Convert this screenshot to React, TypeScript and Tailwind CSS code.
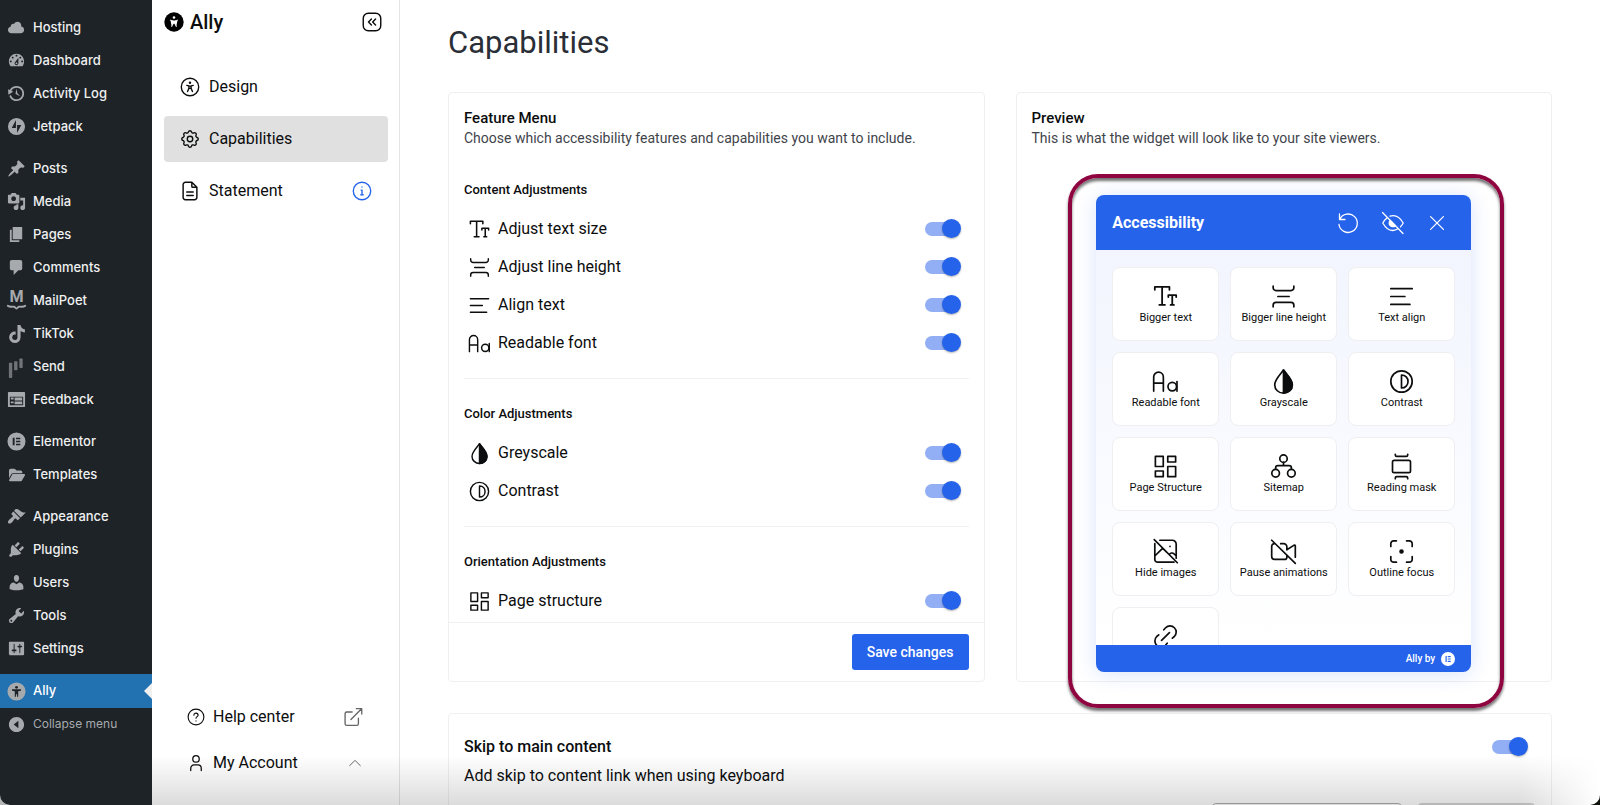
import React from 'react';
import { FaFolderOpen, FaTiktok } from 'react-icons/fa6';

interface IconProps {
  className?: string;
}

// 20px grid, filled
const DASHICONS = {
  cloud:
    'M14.9 9c1.8.2 3.1 1.7 3.1 3.5 0 1.9-1.6 3.5-3.5 3.5h-10C2.6 16 1 14.4 1 12.5 1 10.7 2.3 9.3 4.1 9 4 8.9 4 8.7 4 8.5 4 7.1 5.1 6 6.5 6c.3 0 .7.1.9.2C8.1 4.9 9.4 4 11 4c2.2 0 4 1.8 4 4 0 .4-.1.7-.1 1z',
  dashboard:
    'M3.76 16h12.48c1.1-1.37 1.76-3.11 1.76-5 0-4.42-3.58-8-8-8s-8 3.58-8 8c0 1.89.66 3.63 1.76 5zM10 4c.55 0 1 .45 1 1s-.45 1-1 1-1-.45-1-1 .45-1 1-1zM6 6c.55 0 1 .45 1 1s-.45 1-1 1-1-.45-1-1 .45-1 1-1zm8 0c.55 0 1 .45 1 1s-.45 1-1 1-1-.45-1-1 .45-1 1-1zm-5.37 5.55L12 7v6c0 1.1-.9 2-2 2s-2-.9-2-2c0-.57.24-1.08.63-1.45zM4 10c.55 0 1 .45 1 1s-.45 1-1 1-1-.45-1-1 .45-1 1-1zm12 0c.55 0 1 .45 1 1s-.45 1-1 1-1-.45-1-1 .45-1 1-1zm-5 3c0-.55-.45-1-1-1s-1 .45-1 1 .45 1 1 1 1-.45 1-1z',
  backup:
    'M13.65 2.88c3.93 2.01 5.48 6.84 3.47 10.77s-6.83 5.48-10.77 3.47c-1.87-.96-3.2-2.56-3.86-4.4l1.64-1.03c.45 1.57 1.52 2.95 3.08 3.76 3.01 1.54 6.69.35 8.23-2.66 1.55-3.01.36-6.69-2.65-8.24C9.78 3.01 6.1 4.2 4.56 7.21l1.88.97-4.95 3.08-.39-5.82 1.78.91C4.9 2.4 9.75.89 13.65 2.88zm-4.36 7.83C9.11 10.53 9 10.28 9 10c0-.07.03-.12.04-.19h-.01L10 5l.97 4.81L14 13l-4.5-2.12.02-.02c-.08-.04-.16-.09-.23-.15z',
  jetpack: 'M10 1a9 9 0 1 0 0 18 9 9 0 0 0 0-18zM9.4 11.5H5L9.4 3.2zM10.6 16.8V8.5H15z',
  post: 'M10.44 3.02l1.82-1.82 6.36 6.35-1.83 1.82c-1.05-.68-2.48-.57-3.41.36l-.75.75c-.92.93-1.04 2.35-.35 3.41l-1.83 1.82-2.41-2.41-2.8 2.79c-.42.42-3.38 2.71-3.8 2.29s1.86-3.39 2.28-3.81l2.79-2.79L4.1 9.36l1.83-1.82c1.05.69 2.48.57 3.4-.36l.75-.75c.93-.92 1.05-2.35.36-3.41z',
  media:
    'M13 11V4c0-.55-.45-1-1-1h-1.67L9 1H5L3.67 3H2c-.55 0-1 .45-1 1v7c0 .55.45 1 1 1h10c.55 0 1-.45 1-1zM7 4.5c1.38 0 2.5 1.12 2.5 2.5S8.38 9.5 7 9.5 4.5 8.38 4.5 7 5.62 4.5 7 4.5zM14 6h5v10.5c0 1.38-1.12 2.5-2.5 2.5S14 17.88 14 16.5s1.12-2.5 2.5-2.5c.17 0 .34.02.5.05V9h-3V6zm-4 8.05V13h2v3.5c0 1.38-1.12 2.5-2.5 2.5S7 17.88 7 16.5 8.12 14 9.5 14c.17 0 .34.02.5.05z',
  page: 'M6 15V2h10v13H6zm-1 1h8v2H3V5h2v11z',
  comments: 'M5 2h9c1.1 0 2 .9 2 2v7c0 1.1-.9 2-2 2h-2l-5 5v-5H5c-1.1 0-2-.9-2-2V4c0-1.1.9-2 2-2z',
  feedback:
    'M2 2h16c.55 0 1 .45 1 1v14c0 .55-.45 1-1 1H2c-.55 0-1-.45-1-1V3c0-.55.45-1 1-1zm15 14V7H3v9h14zM4 8v2h3V8H4zm4 0v3h8V8H8zm-4 4v2h3v-2H4zm4 0v3h8v-3H8z',
  elementor: 'M10 .5a9.5 9.5 0 1 0 0 19 9.5 9.5 0 0 0 0-19zM6 6h2v8H6zM9.5 6H14v1.7H9.5zM9.5 9.15H14v1.7H9.5zM9.5 12.3H14V14H9.5z',
  appearance:
    'M14.48 11.06L7.41 3.99l1.5-1.5c.5-.56 2.3-.47 3.51.32 1.21.8 1.43 1.28 2.91 2.1 1.18.64 2.45 1.26 4.45.85zm-.71.71L6.7 4.7 4.93 6.47c-.39.39-.39 1.02 0 1.41l1.06 1.06c.39.39.39 1.03 0 1.42-.6.6-1.43 1.11-2.21 1.69-.35.26-.7.53-1.01.84C1.43 14.23.4 16.08 1.4 17.07c.99 1 2.84-.03 4.18-1.36.31-.31.58-.66.85-1.02.57-.78 1.08-1.61 1.69-2.21.39-.39 1.02-.39 1.41 0l1.06 1.06c.39.39 1.02.39 1.41 0z',
  plugins:
    'M13.11 4.36L9.87 7.6 8 5.73l3.24-3.24c.35-.34 1.05-.2 1.56.32.52.51.66 1.21.31 1.55zm-8 1.77l.91-1.12 9.01 9.01-1.19.84c-.71.71-2.63 1.16-3.82 1.16H6.14L4.9 17.26c-.59.59-1.54.59-2.12 0-.59-.58-.59-1.53 0-2.12l1.24-1.24v-3.88c0-1.13.4-3.19 1.09-3.89zm7.26 3.97l3.24-3.24c.34-.35 1.04-.21 1.55.31.52.51.66 1.21.31 1.55l-3.24 3.25z',
  users:
    'M10 9.25c-2.27 0-2.73-3.44-2.73-3.44C7 4.02 7.82 2 9.97 2c2.16 0 2.98 2.02 2.71 3.81 0 0-.41 3.44-2.68 3.44zm0 2.57L12.72 10c2.39 0 4.52 2.33 4.52 4.53v2.49s-3.65 1.13-7.24 1.13c-3.65 0-7.24-1.13-7.24-1.13v-2.49c0-2.25 1.94-4.48 4.47-4.48z',
  tools:
    'M16.68 9.77c-1.34 1.34-3.3 1.67-4.95.99l-5.41 6.52c-.99.99-2.59.99-3.58 0s-.99-2.59 0-3.57l6.52-5.42c-.68-1.65-.35-3.61.99-4.95 1.28-1.28 3.12-1.62 4.72-1.06l-2.89 2.89 2.82 2.82 2.86-2.87c.53 1.58.18 3.39-1.08 4.65zM3.81 16.21c.4.39 1.04.39 1.43 0 .4-.4.4-1.04 0-1.43-.39-.4-1.03-.4-1.43 0-.39.39-.39 1.03 0 1.43z',
  settings:
    'M18 16V4c0-.55-.45-1-1-1H3c-.55 0-1 .45-1 1v12c0 .55.45 1 1 1h14c.55 0 1-.45 1-1zM8 11h1c.55 0 1 .45 1 1s-.45 1-1 1H8v1.5c0 .28-.22.5-.5.5s-.5-.22-.5-.5V13H6c-.55 0-1-.45-1-1s.45-1 1-1h1V5.5c0-.28.22-.5.5-.5s.5.22.5.5V11zm5-2h-1c-.55 0-1-.45-1-1s.45-1 1-1h1V5.5c0-.28.22-.5.5-.5s.5.22.5.5V7h1c.55 0 1 .45 1 1s-.45 1-1 1h-1v5.5c0 .28-.22.5-.5.5s-.5-.22-.5-.5V9z',
  collapse: 'M10 2c4.42 0 8 3.58 8 8s-3.58 8-8 8-8-3.58-8-8 3.58-8 8-8zm2 12V6l-5 4z'
};

const Dashicon: React.FC<{ name: keyof typeof DASHICONS }> = ({ name }) => (
  <svg viewBox="0 0 20 20" className="h-[19px] w-[19px]" fill="currentColor" fillRule="evenodd">
    <path d={DASHICONS[name]} />
  </svg>
);

const MailPoetIcon = () => (
  <svg viewBox="0 0 20 20" className="h-[19px] w-[19px] overflow-visible" fill="currentColor">
    <text x="10" y="12" textAnchor="middle" fontSize="17" fontWeight="700" fontFamily="Roboto, sans-serif">
      M
    </text>
    <path
      d="M.8 15.5c2.5 1.9 4.5.6 6.700 1.100 1.200.3 1.500 1.900 2.500 1.900s1.300-1.600 2.500-1.900c2.200-.5 4.200.8 6.700-1.100"
      fill="none"
      stroke="currentColor"
      strokeWidth="2"
      strokeLinecap="round"
    />
  </svg>
);

const SendIcon = () => (
  <svg viewBox="0 0 20 20" className="h-[19px] w-[19px] overflow-visible opacity-60" fill="currentColor">
    <rect x="2" y="6" width="3.5" height="16" rx=".8" />
    <rect x="7.5" y="4.5" width="3.5" height="9.5" rx=".8" />
    <rect x="13" y="1.500" width="3.5" height="10" rx=".8" />
  </svg>
);

const AllyMenuIcon = () => (
  <svg viewBox="0 0 20 20" className="h-[19px] w-[19px]">
    <circle cx="10" cy="10" r="9.5" fill="#a7aaad" />
    <g fill="#1d2327">
      <circle cx="10" cy="5.600" r="1.500" />
      <path d="M5.300 7.600h9.400v1.600l-2.900.5v5.800h-1.200v-2.700H9.400v2.700H8.200V9.700l-2.900-.5z" />
    </g>
  </svg>
);

// 24px grid, outlined
const Outline: React.FC<IconProps & { children: React.ReactNode; strokeWidth?: number }> = ({
  className = 'h-6 w-6',
  children,
  strokeWidth = 1.5
}) => (
  <svg
    viewBox="0 0 24 24"
    className={className}
    fill="none"
    stroke="currentColor"
    strokeWidth={strokeWidth}
    strokeLinecap="round"
    strokeLinejoin="round"
  >
    {children}
  </svg>
);

const PersonCircle: React.FC<IconProps> = ({ className }) => (
  <Outline className={className}>
    <circle cx="12" cy="12" r="9.5" />
    <circle cx="12" cy="7.400" r="1.300" fill="currentColor" stroke="none" />
    <path d="M8.500 10.200l2.300.6v2.700L9.300 17M15.500 10.200l-2.300.6v2.700l1.500 3.500M10.800 11h2.400v2.500h-2.400z" />
  </Outline>
);

const AllyLogo = () => (
  <svg viewBox="0 0 20 20" className="h-5 w-5">
    <circle cx="10" cy="10" r="9.700" fill="#000" />
    <circle cx="10" cy="5.500" r="1.300" fill="#fff" />
    <path
      d="M6.500 8.200l2.800.7v2.500L7.700 14.600M13.500 8.200l-2.800.7v2.500l1.600 3.200M9.300 9h1.400v2.200H9.300z"
      fill="#fff"
      stroke="#fff"
      strokeWidth=".9"
      strokeLinejoin="round"
      strokeLinecap="round"
    />
  </svg>
);

const GearIcon: React.FC<IconProps> = ({ className }) => (
  <Outline className={className}>
    <path d="M10.325 4.317c.426-1.756 2.924-1.756 3.350 0a1.724 1.724 0 0 0 2.573 1.066c1.543-.94 3.310.826 2.370 2.370a1.724 1.724 0 0 0 1.065 2.572c1.756.426 1.756 2.924 0 3.350a1.724 1.724 0 0 0-1.066 2.573c.94 1.543-.826 3.310-2.370 2.370a1.724 1.724 0 0 0-2.572 1.065c-.426 1.756-2.924 1.756-3.350 0a1.724 1.724 0 0 0-2.573-1.066c-1.543.94-3.310-.826-2.370-2.370a1.724 1.724 0 0 0-1.065-2.572c-1.756-.426-1.756-2.924 0-3.350a1.724 1.724 0 0 0 1.066-2.573c-.94-1.543.826-3.310 2.370-2.370 1 .608 2.296.07 2.572-1.065z" />
    <circle cx="12" cy="12" r="3" />
  </Outline>
);

const DocIcon: React.FC<IconProps> = ({ className }) => (
  <Outline className={className} strokeWidth={1.6}>
    <path d="M14 2.500v4.500a1 1 0 0 0 1 1h4.500M17 21.500H7A2.500 2.500 0 0 1 4.500 19V5A2.500 2.500 0 0 1 7 2.500h7L19.500 8v11a2.500 2.500 0 0 1-2.500 2.500zM8.500 13h7M8.500 17h7" />
  </Outline>
);

const TextSizeIcon: React.FC<IconProps> = ({ className }) => (
  <Outline className={className} strokeWidth={1.6}>
    <path d="M2.500 6V3.500h13V6M9 3.500v16M6.500 19.500h5M14.500 12.500v-1.700h7v1.700M18 10.800v8.700M16.500 19.500h3" />
  </Outline>
);

const LineHeightIcon: React.FC<IconProps> = ({ className }) => (
  <Outline className={className}>
    <path d="M2.800 2.800v1.400a2.500 2.500 0 0 0 2.500 2.500h13.400a2.500 2.500 0 0 0 2.500-2.500V2.800M2.800 21.200v-1.400a2.500 2.500 0 0 1 2.500-2.500h13.400a2.500 2.500 0 0 1 2.500 2.500v1.400M7 12h10" />
  </Outline>
);

const AlignIcon: React.FC<IconProps> = ({ className }) => (
  <Outline className={className}>
    <path d="M2.500 5h19M2.500 12H15M2.500 19h17" />
  </Outline>
);

const FontIcon: React.FC<IconProps> = ({ className }) => (
  <Outline className={className}>
    <path d="M1.500 20.500V8a4.300 4.300 0 0 1 8.600 0v12.500M1.500 13.500h8.600" />
    <circle cx="18" cy="16.500" r="3.800" />
    <path d="M22.200 12v8.500" />
  </Outline>
);

const DropIcon: React.FC<IconProps> = ({ className }) => (
  <Outline className={className}>
    <path d="M12 1.800c-2 3.200-7.800 8.200-7.800 13.200a7.800 7.400 0 0 0 15.600 0c0-5-5.800-10-7.800-13.200z" />
    <path d="M12 1.800v20.600a7.800 7.400 0 0 0 7.800-7.400c0-5-5.800-10-7.800-13.200z" fill="currentColor" />
  </Outline>
);

const ContrastIcon: React.FC<IconProps> = ({ className }) => (
  <Outline className={className}>
    <circle cx="12" cy="12" r="9.5" />
    <path d="M12 6.200v11.600c3.500 0 5.800-2.600 5.800-5.800S15.500 6.200 12 6.200z" />
  </Outline>
);

const StructureIcon: React.FC<IconProps> = ({ className }) => (
  <Outline className={className}>
    <path d="M3 3h7v9H3zM14 3h7v5h-7zM3 16h7v5H3zM14 12h7v9h-7z" />
  </Outline>
);

const SitemapIcon: React.FC<IconProps> = ({ className }) => (
  <Outline className={className}>
    <circle cx="12" cy="5" r="3.300" />
    <circle cx="5" cy="18" r="3.400" />
    <circle cx="19" cy="18" r="3.400" />
    <path d="M12 8.300v3M5 14.300v-1a2 2 0 0 1 2-2h10a2 2 0 0 1 2 2v1" />
  </Outline>
);

const ReadingMaskIcon: React.FC<IconProps> = ({ className }) => (
  <Outline className={className}>
    <rect x="4" y="6.500" width="16" height="11" rx="1.500" />
    <path d="M6.500 1.200v.6A1.200 1.200 0 0 0 7.700 3h8.600a1.200 1.200 0 0 0 1.200-1.200v-.6M6.500 22.800v-.6A1.200 1.200 0 0 1 7.700 21h8.600a1.200 1.200 0 0 1 1.200 1.200v.6" />
  </Outline>
);

const HideImagesIcon: React.FC<IconProps> = ({ className }) => (
  <Outline className={className}>
    <path d="M7 2h11a3.500 3.500 0 0 1 3.500 3.500V18M19.500 21.500H5A2.500 2.500 0 0 1 2.500 19V5M2 1.500l20.500 20.500M2.500 16L8 10.500c1-1 2-1 3 0l2 2M15.500 14.500c1-1.200 2.800-1.500 4-.5l2 2M16 7.500h.01" />
  </Outline>
);

const PauseAnimationsIcon: React.FC<IconProps> = ({ className }) => (
  <Outline className={className}>
    <path d="M1.500 2l21 20.500M9.500 5H12a3 3 0 0 1 3 3v2.500l6.500-4.200a.7.700 0 0 1 1 .6V17M15 15.500V17a2 2 0 0 1-2 2H4a2.500 2.500 0 0 1-2.500-2.500v-9A2.500 2.500 0 0 1 4 5" />
  </Outline>
);

const FocusIcon: React.FC<IconProps> = ({ className }) => (
  <Outline className={className}>
    <path d="M2.500 7.500V5A2.500 2.500 0 0 1 5 2.500h2.500M16.500 2.500H19A2.500 2.500 0 0 1 21.500 5v2.500M21.500 16.500V19a2.500 2.500 0 0 1-2.500 2.500h-2.500M7.500 21.500H5A2.500 2.500 0 0 1 2.500 19v-2.500" />
    <circle cx="12" cy="12" r="1.300" fill="currentColor" />
  </Outline>
);

const LinkIcon: React.FC<IconProps> = ({ className }) => (
  <Outline className={className}>
    <path d="M8.500 15.500l7-7M10.500 6l1.600-1.800a5.500 5.500 0 0 1 7.800 7.800l-1.800 1.500M13.500 18l-1.500 1.800A5.500 5.500 0 0 1 4.200 12L6 10.500" />
  </Outline>
);

const NAV_GROUPS = [
  [
    { label: 'Hosting', icon: <Dashicon name="cloud" /> },
    { label: 'Dashboard', icon: <Dashicon name="dashboard" /> },
    { label: 'Activity Log', icon: <Dashicon name="backup" /> },
    { label: 'Jetpack', icon: <Dashicon name="jetpack" /> }
  ],
  [
    { label: 'Posts', icon: <Dashicon name="post" /> },
    { label: 'Media', icon: <Dashicon name="media" /> },
    { label: 'Pages', icon: <Dashicon name="page" /> },
    { label: 'Comments', icon: <Dashicon name="comments" /> },
    { label: 'MailPoet', icon: <MailPoetIcon /> },
    { label: 'TikTok', icon: <FaTiktok className="h-[18px] w-[18px]" /> },
    { label: 'Send', icon: <SendIcon /> },
    { label: 'Feedback', icon: <Dashicon name="feedback" /> }
  ],
  [
    { label: 'Elementor', icon: <Dashicon name="elementor" /> },
    { label: 'Templates', icon: <FaFolderOpen className="h-4 w-4" /> }
  ],
  [
    { label: 'Appearance', icon: <Dashicon name="appearance" /> },
    { label: 'Plugins', icon: <Dashicon name="plugins" /> },
    { label: 'Users', icon: <Dashicon name="users" /> },
    { label: 'Tools', icon: <Dashicon name="tools" /> },
    { label: 'Settings', icon: <Dashicon name="settings" /> }
  ]
];

const FEATURES = [
  {
    title: 'Content Adjustments',
    items: [
      { label: 'Adjust text size', Icon: TextSizeIcon },
      { label: 'Adjust line height', Icon: LineHeightIcon },
      { label: 'Align text', Icon: AlignIcon },
      { label: 'Readable font', Icon: FontIcon }
    ]
  },
  {
    title: 'Color Adjustments',
    items: [
      { label: 'Greyscale', Icon: DropIcon },
      { label: 'Contrast', Icon: ContrastIcon }
    ]
  },
  {
    title: 'Orientation Adjustments',
    items: [{ label: 'Page structure', Icon: StructureIcon }]
  }
];

const TILES = [
  { label: 'Bigger text', Icon: TextSizeIcon },
  { label: 'Bigger line height', Icon: LineHeightIcon },
  { label: 'Text align', Icon: AlignIcon },
  { label: 'Readable font', Icon: FontIcon },
  { label: 'Grayscale', Icon: DropIcon },
  { label: 'Contrast', Icon: ContrastIcon },
  { label: 'Page Structure', Icon: StructureIcon },
  { label: 'Sitemap', Icon: SitemapIcon },
  { label: 'Reading mask', Icon: ReadingMaskIcon },
  { label: 'Hide images', Icon: HideImagesIcon },
  { label: 'Pause animations', Icon: PauseAnimationsIcon },
  { label: 'Outline focus', Icon: FocusIcon }
];

const Toggle: React.FC<{ id: string }> = ({ id }) => (
  <input
    id={id}
    type="checkbox"
    defaultChecked
    className="relative h-5 w-9 shrink-0 cursor-pointer appearance-none before:absolute before:top-[3px] before:left-0 before:h-3.5 before:w-[34px] before:rounded-full before:bg-gray-300 after:absolute after:top-0 after:left-0 after:h-[19px] after:w-[19px] after:rounded-full after:bg-white after:shadow-[0_1px_2px_rgba(0,0,0,0.3)] checked:before:bg-[#92aff5] checked:after:left-[17px] checked:after:bg-[#2563eb]"
  />
);

const AdminMenu = () => (
  <nav className="w-[152px] shrink-0 bg-[#1d2327] pt-[11px] font-['Inter',sans-serif] text-[13px] font-medium text-[#f0f0f1]">
    {NAV_GROUPS.map((group, i) => (
      <ul key={i} className="mb-[9px]">
        {group.map(({ label, icon }) => (
          <li key={label}>
            <a href="#" className="flex h-[33px] items-center gap-[7px] pl-[7px]">
              <span className="flex w-[19px] justify-center text-[#a7aaad]">{icon}</span>
              {label}
            </a>
          </li>
        ))}
      </ul>
    ))}
    <a href="#" className="relative flex h-[34px] items-center gap-[7px] bg-[#2271b1] pl-[6px] text-white">
      <span className="flex w-5 justify-center">
        <AllyMenuIcon />
      </span>
      Ally
      <span className="absolute top-[9px] right-0 border-y-8 border-r-8 border-y-transparent border-r-[#f0f0f1]" />
    </a>
    <button className="flex h-8 items-center gap-[7px] pl-[7px] text-xs font-normal text-[#a7aaad]">
      <Dashicon name="collapse" />
      Collapse menu
    </button>
  </nav>
);

const AllySidebar = () => (
  <aside className="flex w-[248px] shrink-0 flex-col border-r border-[#e4e4e6] pr-[11px] pl-3 text-base">
    <div className="flex h-[44px] items-center pr-[6px]">
      <AllyLogo />
      <span className="ml-[6px] flex-1 text-xl font-medium">Ally</span>
      <button aria-label="Collapse sidebar">
        <Outline className="h-5 w-5" strokeWidth={1.7}>
          <rect x="1.500" y="1.500" width="21" height="21" rx="6" />
          <path d="M11.300 8.500L7.800 12l3.500 3.500M16.300 8.500L12.800 12l3.500 3.500" />
        </Outline>
      </button>
    </div>
    <nav className="mt-5 flex flex-col gap-[6px]">
      <a href="#" className="flex h-[46px] items-center gap-2 px-[15px]">
        <PersonCircle className="h-[22px] w-[22px]" />
        Design
      </a>
      <a href="#" className="flex h-[46px] items-center gap-2 rounded bg-[#e0e0e0] px-[15px]">
        <GearIcon className="h-[22px] w-[22px]" />
        Capabilities
      </a>
      <a href="#" className="flex h-[46px] items-center gap-2 px-[15px]">
        <DocIcon className="h-[22px] w-[22px]" />
        <span className="flex-1">Statement</span>
        <Outline className="h-[22px] w-[22px] text-[#2563eb]">
          <circle cx="12" cy="12" r="9.5" />
          <path d="M12 7.500v.2M11 11h1v5M10.500 16.200h3" />
        </Outline>
      </a>
    </nav>
    <div className="mt-auto mb-[19px] pr-[25px] pl-[23px]">
      <a href="#" className="flex h-[46px] items-center gap-2">
        <Outline className="h-[18px] w-[18px]">
          <circle cx="12" cy="12" r="10.500" />
          <path d="M9.200 9.500c0-3.700 5.600-3.600 5.600 0 0 2-2.800 2-2.800 4M12 17v.2" />
        </Outline>
        <span className="flex-1">Help center</span>
        <Outline className="h-5 w-5 text-[#666]" strokeWidth={1.6}>
          <path d="M11 6H4.500A2 2 0 0 0 2.500 8v12a2 2 0 0 0 2 2h12a2 2 0 0 0 2-2v-6.500M9.500 15L22 2.500M16 2h6.500v6.500" />
        </Outline>
      </a>
      <button className="flex h-[46px] w-full items-center gap-2 text-left">
        <Outline className="h-[18px] w-[18px]" strokeWidth={1.7}>
          <circle cx="12" cy="6.500" r="4.300" />
          <path d="M5 22v-3a4.500 4.500 0 0 1 4.500-4.500h5A4.500 4.500 0 0 1 19 19v3" />
        </Outline>
        <span className="flex-1">My Account</span>
        <Outline className="h-4 w-4 text-[#666]">
          <path d="M4 16l8-8 8 8" />
        </Outline>
      </button>
    </div>
  </aside>
);

const FeatureMenu = () => (
  <section className="flex h-[590px] flex-col rounded border border-[#f0f0f1]">
    <div className="min-h-0 flex-1 overflow-hidden px-[15px] pt-[15px]">
      <h2 className="text-[15px] leading-5 font-medium">Feature Menu</h2>
      <p className="text-sm leading-5 text-[#3f444b]">
        Choose which accessibility features and capabilities you want to include.
      </p>
      <div className="mt-8">
        {FEATURES.map(({ title, items }) => (
          <div key={title} className="mb-[25px] border-b border-[#f0f0f1] pb-4">
            <h3 className="mb-[10px] text-[13px] leading-5 font-medium">{title}</h3>
            {items.map(({ label, Icon }) => (
              <div key={label} className="flex h-[38px] items-center gap-[7px] pr-2 pl-1">
                <Icon className="h-[23px] w-[23px]" />
                <label htmlFor={label} className="flex-1 text-base">
                  {label}
                </label>
                <Toggle id={label} />
              </div>
            ))}
          </div>
        ))}
      </div>
    </div>
    <div className="flex h-[59px] shrink-0 items-center justify-end border-t border-[#f0f0f1] px-[15px]">
      <button className="h-9 rounded-[3px] bg-[#2563eb] px-[15px] text-sm font-medium text-white">Save changes</button>
    </div>
  </section>
);

const Widget = () => (
  <div className="flex h-[477px] flex-col overflow-hidden rounded-lg shadow-[0_2px_20px_rgba(37,99,235,0.18)]">
    <div className="flex h-[55px] shrink-0 items-center bg-[#2563eb] px-4 text-white">
      <span className="flex-1 text-base font-bold">Accessibility</span>
      <div className="flex items-center gap-[21px] pr-[7px]">
        <button aria-label="Reset">
          <Outline className="h-6 w-6" strokeWidth={1.3}>
            <path d="M3.500 3v5.500H9M3.800 8.300a9.200 9.200 0 1 1-.8 5.200" />
          </Outline>
        </button>
        <button aria-label="Hide widget">
          <Outline className="h-6 w-6" strokeWidth={1.3}>
            <path d="M1.500 1.500l20.500 21M9 5.200c5-1.600 9.600.5 13.200 6.800-.8 1.500-1.700 2.700-2.700 3.700M16.500 18c-5.500 3-10.800 1-14.700-6 1.200-2.200 2.600-3.900 4.200-5" />
            <path d="M9.300 9.500a3.600 3.600 0 0 0 5 5.200z" fill="currentColor" />
          </Outline>
        </button>
        <button aria-label="Close">
          <Outline className="h-[22px] w-[22px]" strokeWidth={1.4}>
            <path d="M5 5l14 14M19 5L5 19" />
          </Outline>
        </button>
      </div>
    </div>
    <div className="grid min-h-0 flex-1 auto-rows-[74px] grid-cols-3 gap-[11px] overflow-hidden bg-gradient-to-b from-[#f2f5fe] to-white px-4 pt-[17px]">
      {TILES.map(({ label, Icon }) => (
        <button
          key={label}
          className="flex flex-col items-center rounded-lg border border-[#efeff2] bg-white pt-[15px] text-[11px] leading-[15px]"
        >
          <Icon className="h-[27px] w-[27px]" />
          {label}
        </button>
      ))}
      <button
        aria-label="Highlight links"
        className="flex flex-col items-center rounded-lg border border-[#efeff2] bg-white pt-[15px]"
      >
        <LinkIcon className="h-[27px] w-[27px]" />
      </button>
    </div>
    <div className="flex h-[27px] shrink-0 items-center justify-end gap-[6px] bg-[#2563eb] px-4 text-[10px] font-medium text-white">
      Ally by
      <svg viewBox="0 0 14 14" className="h-3.5 w-3.5">
        <circle cx="7" cy="7" r="7" fill="#fff" />
        <path d="M4.500 4h1.200v6H4.500zM6.700 4h3v1.200h-3zM6.700 6.400h3v1.200h-3zM6.700 8.800h3V10h-3z" fill="#2563eb" />
      </svg>
    </div>
  </div>
);

const Preview = () => (
  <section className="h-[590px] rounded border border-[#f0f0f1] px-[15px] pt-[15px]">
    <h2 className="text-[15px] leading-5 font-medium">Preview</h2>
    <p className="text-sm leading-5 text-[#3f444b]">This is what the widget will look like to your site viewers.</p>
    <div className="relative mx-auto mt-[47px] w-[375px]">
      <Widget />
      {/* highlight frame over the widget */}
      <div className="pointer-events-none absolute -top-[21px] -right-[33px] -bottom-9 -left-7 rounded-[30px] border-4 border-[#8f0540] shadow-[0_3px_3px_rgba(0,0,0,0.55),inset_0_3px_3px_rgba(0,0,0,0.55)]" />
    </div>
  </section>
);

const SkipToContent = () => (
  <section className="mt-[31px] rounded border border-[#f0f0f1] px-[15px] pt-[23px] pb-10">
    <div className="flex items-center justify-between pr-2">
      <label htmlFor="skip-link" className="text-base leading-5 font-medium">
        Skip to main content
      </label>
      <Toggle id="skip-link" />
    </div>
    <p className="mt-[9px] text-base leading-5">Add skip to content link when using keyboard</p>
    <div className="mt-[17px] flex justify-end gap-4 pr-px">
      <input aria-label="Content anchor" className="h-10 w-[190px] rounded border border-[#b0b0b0]" />
      <button aria-label="Save anchor" className="h-10 w-[117px] rounded bg-[#d5d5d5]" />
    </div>
  </section>
);

const App: React.FC = () => {
  return (
    <div className="h-screen bg-gradient-to-r from-[#b5b5b5] to-[#10120c]">
      <div className="relative flex h-full overflow-hidden rounded-b-[10px] bg-white font-['Roboto',sans-serif] text-[#0c0d0e]">
        <AdminMenu />
        <AllySidebar />
        <main className="min-w-0 flex-1 px-12 pt-[23px]">
          <h1 className="mb-[29px] text-[31px] leading-10 text-[#2a2e37]">Capabilities</h1>
          <div className="grid grid-cols-2 gap-[31px]">
            <FeatureMenu />
            <Preview />
          </div>
          <SkipToContent />
        </main>
        {/* shade along the bottom edge */}
        <div className="pointer-events-none absolute right-0 bottom-0 left-[152px] h-[50px] bg-gradient-to-t from-black/14 to-transparent [mask-image:linear-gradient(to_left,transparent,black_80px)]" />
      </div>
    </div>
  );
};

export default App;
